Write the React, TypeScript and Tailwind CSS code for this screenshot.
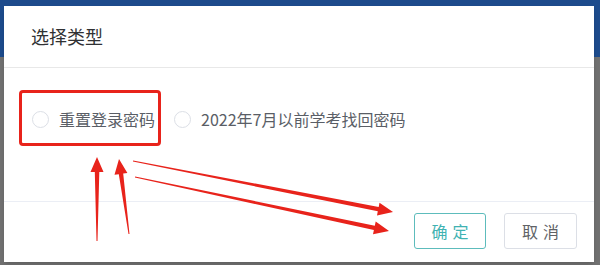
import React from "react";

type Pt = [number, number];

// tapered arrow: thin tail, thicker shaft near the head, pointed head
function arrowPoints(tail: Pt, tip: Pt, tailW = 1, shaftW = 4.5, headL = 15, headW = 13) {
  const dx = tip[0] - tail[0];
  const dy = tip[1] - tail[1];
  const len = Math.hypot(dx, dy);
  const ux = dx / len;
  const uy = dy / len;
  const nx = -uy;
  const ny = ux;
  const base: Pt = [tip[0] - ux * headL, tip[1] - uy * headL];
  const p = (c: Pt, w: number, s: number): string =>
    `${(c[0] + nx * w * s / 2).toFixed(1)},${(c[1] + ny * w * s / 2).toFixed(1)}`;
  return [
    p(tail, tailW, 1),
    p(base, shaftW, 1),
    p(base, headW, 1),
    `${tip[0]},${tip[1]}`,
    p(base, headW, -1),
    p(base, shaftW, -1),
    p(tail, tailW, -1),
  ].join(" ");
}

const arrows: { tail: Pt; tip: Pt }[] = [
  { tail: [97, 241], tip: [97, 157] },
  { tail: [129, 234], tip: [119, 159] },
  { tail: [133, 161], tip: [393, 212] },
  { tail: [135, 177], tip: [389, 231] },
];

function Radio({ label }: { label: string }) {
  return (
    <label className="flex items-center gap-[10px] cursor-pointer">
      <span className="w-[17px] h-[17px] rounded-full border border-[#dcdfe6] bg-white" />
      <span className="text-[16px] leading-[20px] text-[#5a5e66]">{label}</span>
    </label>
  );
}

export default function App() {
  return (
    <div
      className="relative w-[600px] h-[265px] overflow-hidden bg-[#717171]"
      style={{ fontFamily: '"Noto Sans CJK SC", "Noto Sans", sans-serif' }}
    >
      <div className="h-[57px] bg-[#1d4b8c]" />

      {/* dialog */}
      <div className="absolute left-[4px] top-[6px] w-[590px] h-[256px] bg-white flex flex-col shadow-md">
        <div className="h-[62px] flex items-center px-[27px] border-b border-[#e8e8e8]">
          <h2 className="text-[18px] text-[#303133]">选择类型</h2>
        </div>

        <div className="h-[134px] flex items-start gap-[19px] pl-[28px] pt-[41px] border-b border-[#ebeef5]">
          <Radio label="重置登录密码" />
          <Radio label="2022年7月以前学考找回密码" />
        </div>

        <div className="flex-1 flex justify-end items-start gap-[18px] pt-[11px] pr-[17px]">
          <button className="w-[72px] h-[36px] rounded-[3px] border border-[#5dbcbc] text-[#3fb2b2] text-[16px] tracking-[5px] pl-[5px]">
            确定
          </button>
          <button className="w-[73px] h-[36px] rounded-[3px] border border-[#dcdfe6] text-[#606266] text-[16px] tracking-[5px] pl-[5px]">
            取消
          </button>
        </div>
      </div>

      {/* annotation: red box */}
      <div className="absolute left-[19px] top-[90px] w-[142px] h-[56px] border-[3px] border-[#e8231b] rounded-[4px]" />

      {/* annotation: arrows */}
      <svg className="absolute inset-0" width="600" height="265" viewBox="0 0 600 265">
        {arrows.map((a, i) => (
          <polygon key={i} points={arrowPoints(a.tail, a.tip)} fill="#e8231b" />
        ))}
      </svg>
    </div>
  );
}
